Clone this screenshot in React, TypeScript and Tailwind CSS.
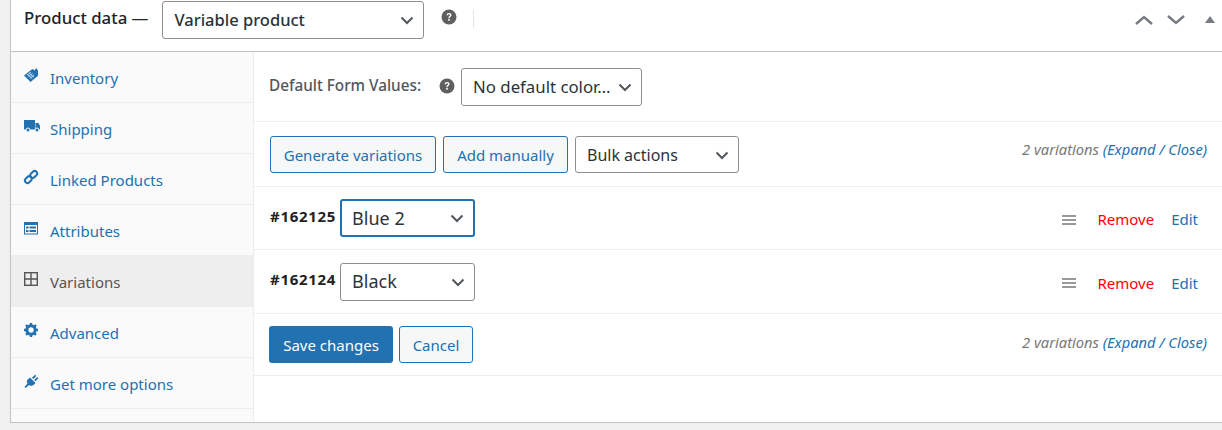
import type { ReactNode } from 'react';

const font = { fontFamily: '"Noto Sans", "Open Sans", sans-serif' };

function Caret({ className = 'text-[#50575e]' }: { className?: string }) {
  return (
    <svg width="16" height="16" viewBox="0 0 16 16" className={className} fill="none" stroke="currentColor" strokeWidth="2">
      <path d="M2.5 5.5 8 11l5.5-5.5" />
    </svg>
  );
}

function Help({ size = 16 }: { size?: number }) {
  return (
    <svg width={size} height={size} viewBox="0 0 16 16">
      <circle cx="8" cy="8" r="7.5" fill="#5f5f5f" />
      <path d="M5.6 6.2c0-1.4 1-2.2 2.5-2.2s2.4.8 2.4 2c0 1.8-1.9 1.7-1.9 3.2H7.3c0-2 1.7-2 1.7-3.1 0-.5-.4-.8-.9-.8-.6 0-1 .4-1 1z" fill="#fff" />
      <rect x="7.2" y="10" width="1.6" height="1.7" fill="#fff" />
    </svg>
  );
}

function Select({ label, className, focus }: { label: string; className: string; focus?: boolean }) {
  return (
    <div
      className={`flex items-center justify-between rounded-[3px] bg-white pr-[8px] text-[#2c3338] ${
        focus ? 'border-2 border-[#2271b1] pl-[10px]' : 'border border-[#8c8f94] pl-[11px]'
      } ${className}`}
    >
      <span className="truncate">{label}</span>
      <Caret />
    </div>
  );
}

function Button({ children, className }: { children: ReactNode; className: string }) {
  return (
    <div className={`flex items-center justify-center rounded-[3px] border border-[#2271b1] bg-[#f6f7f7] text-[15px] text-[#2271b1] ${className}`}>
      {children}
    </div>
  );
}

const tabIcons: Record<string, ReactNode> = {
  Inventory: (
    <svg width="16" height="16" viewBox="0 0 16 16" fill="#2271b1">
      <path d="M8 3 1 8.5 7.6 15 15 8.8V3.4L13.2 1 11.6 3.4 10 2z" />
      <path d="M4 8.2 8 5M5.5 9.7 9.5 6.4M7 11.2l4-3.3M6 6l5 4.4M4.4 7.4l5 4.4" stroke="#fafafa" strokeWidth=".7" fill="none" />
    </svg>
  ),
  Shipping: (
    <svg width="18" height="16" viewBox="0 0 18 16" fill="#2271b1">
      <rect x="1" y="2" width="11" height="9.5" />
      <path d="M12.5 5H15.5L17 8V11.5H12.5z" />
      <circle cx="5" cy="12" r="2" stroke="#fafafa" />
      <circle cx="14" cy="12" r="2" stroke="#fafafa" />
    </svg>
  ),
  'Linked Products': (
    <svg width="16" height="16" viewBox="0 0 16 16" fill="none" stroke="#2271b1" strokeWidth="2">
      <rect x="1.6" y="8.2" width="7.5" height="5" rx="2.5" transform="rotate(-45 5.3 10.7)" />
      <rect x="6.9" y="2.9" width="7.5" height="5" rx="2.5" transform="rotate(-45 10.7 5.3)" />
    </svg>
  ),
  Attributes: (
    <svg width="16" height="16" viewBox="0 0 16 16">
      <rect x="1" y="2" width="14" height="12.5" fill="#2271b1" />
      <rect x="2" y="5" width="12" height="8.5" fill="#fafafa" />
      <rect x="3" y="6.5" width="2.5" height="2" fill="#2271b1" />
      <rect x="3" y="10" width="2.5" height="2" fill="#2271b1" />
      <rect x="6.5" y="6.5" width="6.5" height="2" fill="#2271b1" />
      <rect x="6.5" y="10" width="6.5" height="2" fill="#2271b1" />
    </svg>
  ),
  Variations: (
    <svg width="16" height="16" viewBox="0 0 16 16" fill="none" stroke="#555" strokeWidth="1.4">
      <rect x="1.7" y="1.7" width="12.6" height="12.6" />
      <path d="M8 1.7v12.6M1.7 8h12.6" />
    </svg>
  ),
  Advanced: (
    <svg width="16" height="16" viewBox="0 0 16 16">
      <circle cx="8" cy="8" r="4.2" fill="none" stroke="#2271b1" strokeWidth="3" />
      <path d="M8 1v14M1 8h14M3 3l10 10M13 3 3 13" stroke="#2271b1" strokeWidth="2.4" strokeDasharray="2.4 9.2" strokeDashoffset="0" />
    </svg>
  ),
  'Get more options': (
    <svg width="16" height="16" viewBox="0 0 16 16" fill="#2271b1">
      <path d="M7 4.5 12.5 10 10.5 12c-1.5 1.2-3.2.9-4.3-.1L2.5 15 1.5 14l3-3.4C3.5 9.3 3.6 7.6 5 6.2z" />
      <path d="M9 4.8 12 1.8l1.3 1.2-3 3zM11.2 7 14.2 4l1.2 1.3-3 3z" />
    </svg>
  ),
};

const tabs = ['Inventory', 'Shipping', 'Linked Products', 'Attributes', 'Variations', 'Advanced', 'Get more options'];

function Count() {
  return (
    <div className="text-[14.7px] italic text-[#777]">
      2 variations <span className="text-[#2271b1]">(Expand / Close)</span>
    </div>
  );
}

function Variation({ id, label, focus, className }: { id: string; label: string; focus?: boolean; className: string }) {
  return (
    <div className={`flex items-center border-b border-[#eee] pl-[16px] pr-[24px] ${className}`}>
      <b className="mb-[4px] mr-[4px] text-[15px] font-bold tracking-[0.7px] text-[#222]">{id}</b>
      <Select label={label} focus={focus} className="h-[38px] w-[135px] text-[18px]" />
      <div className="ml-auto flex items-center pt-[3px] text-[15px]">
        <div className="mr-[21px] flex w-[14px] flex-col gap-[2px]">
          <div className="h-[2px] bg-[#999]" />
          <div className="h-[2px] bg-[#999]" />
          <div className="h-[2px] bg-[#999]" />
        </div>
        <span className="mr-[17px] text-[#ff0000]">Remove</span>
        <span className="text-[#2271b1]">Edit</span>
      </div>
    </div>
  );
}

export default function App() {
  return (
    <div className="h-[430px] w-[1222px] overflow-hidden bg-[#f0f0f1] pl-[10px]" style={font}>
      <div className="h-[423px] border-b border-l border-[#c3c4c7] bg-white">
        <div className="flex h-[52px] items-center border-b border-[#c3c4c7] pb-[11px]">
          <h2 className="mb-[5px] ml-[13px] text-[16.8px] font-medium text-[#1d2327]">Product data —</h2>
          <Select label="Variable product" className="ml-[14px] h-[38px] w-[262px] text-[16.5px] font-medium" />
          <div className="mb-[6px] ml-[17px]">
            <Help />
          </div>
          <div className="mb-[2px] ml-[16px] h-[18px] w-px bg-[#e5e5e5]" />
          <div className="mb-[1px] ml-auto mr-[7px] flex items-center">
            <svg width="18" height="10" viewBox="0 0 18 10" fill="none" stroke="#787c82" strokeWidth="2.4">
              <path d="M1 9 9 2l8 7" />
            </svg>
            <svg width="18" height="10" viewBox="0 0 18 10" fill="none" stroke="#787c82" strokeWidth="2.4" className="ml-[14px]">
              <path d="M1 1l8 7 8-7" />
            </svg>
            <div className="ml-[20px] h-0 w-0 border-x-[5px] border-b-[7px] border-x-transparent border-b-[#787c82]" />
          </div>
        </div>
        <div className="flex h-[370px]">
          <div className="w-[243px] shrink-0 border-r border-[#eee] bg-[#fafafa]">
            {tabs.map((tab) => {
              const active = tab === 'Variations';
              return (
                <div
                  key={tab}
                  className={`flex h-[51px] items-center border-b pl-[12px] pt-[3px] text-[15px] ${
                    active ? 'border-[#eee] bg-[#eee] text-[#555]' : 'border-[#eee] text-[#2271b1]'
                  }`}
                >
                  <div className="mb-[8px] flex w-[27px] shrink-0">{tabIcons[tab]}</div>
                  {tab}
                </div>
              );
            })}
          </div>
          <div className="min-w-0 flex-1">
            <div className="flex h-[70px] items-center border-b border-[#eee] pl-[15px]">
              <span className="mb-[2px] text-[15.3px] font-medium text-[#50575e]">Default Form Values:</span>
              <div className="mb-[2px] ml-[18px] mr-[6px]">
                <Help />
              </div>
              <Select label="No default color…" className="h-[38px] w-[181px] text-[16.8px]" />
            </div>
            <div className="flex h-[65px] items-center border-b border-[#eee] pl-[16px] pr-[15px] pt-[1px]">
              <Button className="h-[37px] w-[166px] pt-[2px]">Generate variations</Button>
              <Button className="ml-[7px] h-[37px] w-[125px] pt-[2px]">Add manually</Button>
              <Select label="Bulk actions" className="ml-[7px] h-[37px] w-[164px] text-[16px]" />
              <div className="mb-[10px] ml-auto">
                <Count />
              </div>
            </div>
            <Variation id="#162125" label="Blue 2" focus className="h-[63px]" />
            <Variation id="#162124" label="Black" className="h-[64px]" />
            <div className="flex h-[62px] items-center border-b border-[#eee] pl-[15px] pr-[15px]">
              <div className="flex h-[37px] w-[124px] items-center justify-center rounded-[3px] bg-[#2271b1] pt-[1px] text-[15px] text-white">
                Save changes
              </div>
              <Button className="ml-[6px] h-[37px] w-[74px] pt-[1px]">Cancel</Button>
              <div className="mb-[5px] ml-auto">
                <Count />
              </div>
            </div>
          </div>
        </div>
      </div>
    </div>
  );
}
